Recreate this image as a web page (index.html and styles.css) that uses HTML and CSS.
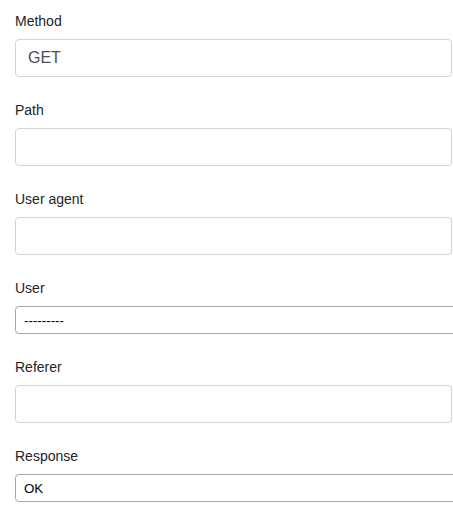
FILE: index.html
```html
<!DOCTYPE html>
<html>
<head>
<meta charset="utf-8">
<link rel="stylesheet" href="styles.css">
</head>
<body>
<form class="form">
  <div class="group">
    <label class="label">Method</label>
    <input class="control" type="text" value="GET">
  </div>
  <div class="group">
    <label class="label">Path</label>
    <input class="control" type="text" value="">
  </div>
  <div class="group">
    <label class="label">User agent</label>
    <input class="control" type="text" value="">
  </div>
  <div class="group">
    <label class="label">User</label>
    <select class="picker"><option>---------</option></select>
  </div>
  <div class="group">
    <label class="label">Referer</label>
    <input class="control" type="text" value="">
  </div>
  <div class="group">
    <label class="label">Response</label>
    <select class="picker"><option>OK</option></select>
  </div>
</form>
</body>
</html>
```
FILE: styles.css
```css
html, body {
  margin: 0;
  padding: 0;
  background: #fff;
  overflow: hidden;
}
body {
  font-family: "Liberation Sans", Arial, sans-serif;
  color: #212529;
}
.form {
  padding: 10px 0 0 15px;
  display: flex;
  flex-direction: column;
  gap: 22px;
}
.group {
  display: flex;
  flex-direction: column;
  align-items: flex-start;
}
.label {
  font-size: 14px;
  line-height: 21px;
  padding-top: 1px;
  margin-bottom: 7px;
}
.control {
  box-sizing: border-box;
  width: 437px;
  height: 38px;
  padding: 6px 12px;
  font-family: "Liberation Sans", Arial, sans-serif;
  font-size: 16px;
  color: #495057;
  border: 1px solid #ced4da;
  border-radius: 4px;
  background: #fff;
  margin: 0;
}
.picker {
  box-sizing: border-box;
  width: 460px;
  height: 28px;
  margin: 0;
  padding: 0 0 0 8px;
  font-family: "Liberation Sans", Arial, sans-serif;
  font-size: 13.33px;
  color: #000;
  border: 1px solid #a7a7a7;
  border-radius: 4px;
  background: #fff;
  -webkit-appearance: none;
  appearance: none;
}
```
